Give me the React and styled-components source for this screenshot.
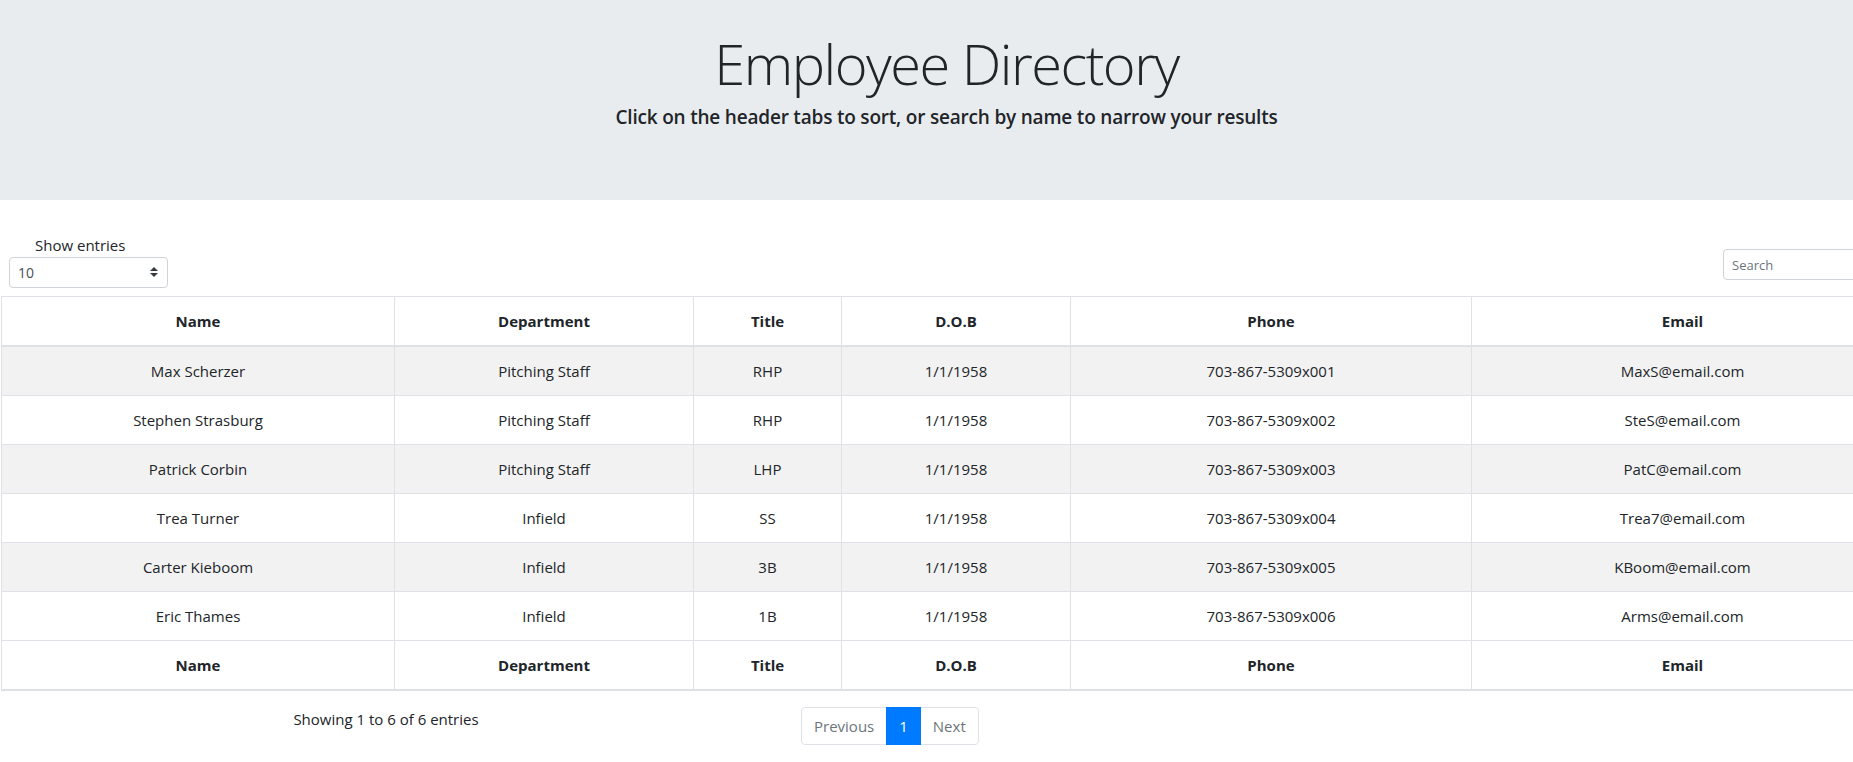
import React from "react";
import styled, { createGlobalStyle } from "styled-components";

const GlobalStyle = createGlobalStyle`
  html, body {
    margin: 0;
    overflow-x: hidden;
  }
  body {
    font-family: "Open Sans", "Noto Sans", sans-serif;
    font-size: 15px;
    color: #212529;
    background: #fff;
  }
  * {
    box-sizing: border-box;
  }
`;

const Page = styled.div`
  width: 1893px;
`;

const Jumbotron = styled.header`
  background: #e9ecef;
  height: 200px;
  padding-top: 30px;
  text-align: center;
`;

const Title = styled.h1`
  margin: 0;
  font-size: 56px;
  font-weight: 300;
  line-height: 1.2;
  letter-spacing: -1.5px;
`;

const Subtitle = styled.p`
  margin: 5px 0 0;
  font-size: 19px;
  font-weight: 600;
  line-height: 30px;
  letter-spacing: -0.2px;
`;

const Controls = styled.div`
  display: flex;
  justify-content: space-between;
  align-items: flex-end;
  padding: 33px 0 8px 9px;
`;

const LengthBox = styled.div`
  display: flex;
  flex-direction: column;
`;

const Label = styled.label`
  padding-left: 26px;
  line-height: 24px;
`;

const SelectWrap = styled.div`
  position: relative;
  width: 159px;
`;

const Select = styled.select`
  appearance: none;
  width: 100%;
  height: 31px;
  padding: 0 24px 0 8px;
  border: 1px solid #ced4da;
  border-radius: 4px;
  background: #fff;
  font-family: inherit;
  font-size: 14px;
  color: #495057;
`;

const Arrow = styled.svg`
  position: absolute;
  right: 10px;
  top: 10px;
  pointer-events: none;
`;

const Search = styled.input`
  width: 170px;
  height: 31px;
  margin-bottom: 8px;
  padding: 0 8px;
  border: 1px solid #ced4da;
  border-radius: 4px;
  font-family: inherit;
  font-size: 13px;
  color: #495057;

  &::placeholder {
    color: #6c757d;
  }
`;

const Table = styled.table`
  margin-left: 1px;
  width: 1892px;
  table-layout: fixed;
  border-collapse: collapse;
  border: 1px solid #dee2e6;
`;

const Cell = styled.td`
  padding: 12px;
  border: 1px solid #dee2e6;
  text-align: center;
  line-height: 24px;
  font-weight: ${(p) => (p.head ? 700 : 400)};
  border-bottom-width: ${(p) => (p.thick ? "2px" : "1px")};
`;

const Row = styled.tr`
  background: ${(p) => (p.striped ? "#f2f2f2" : "#fff")};
`;

const Footer = styled.div`
  display: grid;
  grid-template-columns: 772px auto;
  column-gap: 29px;
  align-items: start;
  padding-top: 16px;
`;

const Info = styled.div`
  text-align: center;
  line-height: 24px;
`;

const Pagination = styled.ul`
  display: flex;
  margin: 0;
  padding: 0;
  list-style: none;
`;

const PageLink = styled.li`
  padding: 8px 12px;
  line-height: 20px;
  border: 1px solid ${(p) => (p.active ? "#007bff" : "#dee2e6")};
  margin-left: ${(p) => (p.first ? "0" : "-1px")};
  background: ${(p) => (p.active ? "#007bff" : "#fff")};
  color: ${(p) => (p.active ? "#fff" : "#6c757d")};
  position: ${(p) => (p.active ? "relative" : "static")};
  z-index: ${(p) => (p.active ? 1 : "auto")};
  border-radius: ${(p) => (p.first ? "4px 0 0 4px" : p.last ? "0 4px 4px 0" : "0")};
  cursor: pointer;
`;

const columns = ["Name", "Department", "Title", "D.O.B", "Phone", "Email"];
const widths = [393, 299, 148, 229, 401, 422];

const employees = [
  ["Max Scherzer", "Pitching Staff", "RHP", "1/1/1958", "703-867-5309x001", "MaxS@email.com"],
  ["Stephen Strasburg", "Pitching Staff", "RHP", "1/1/1958", "703-867-5309x002", "SteS@email.com"],
  ["Patrick Corbin", "Pitching Staff", "LHP", "1/1/1958", "703-867-5309x003", "PatC@email.com"],
  ["Trea Turner", "Infield", "SS", "1/1/1958", "703-867-5309x004", "Trea7@email.com"],
  ["Carter Kieboom", "Infield", "3B", "1/1/1958", "703-867-5309x005", "KBoom@email.com"],
  ["Eric Thames", "Infield", "1B", "1/1/1958", "703-867-5309x006", "Arms@email.com"],
];

function App() {
  return (
    <Page>
      <GlobalStyle />
      <Jumbotron>
        <Title>Employee Directory</Title>
        <Subtitle>Click on the header tabs to sort, or search by name to narrow your results</Subtitle>
      </Jumbotron>

      <Controls>
        <LengthBox>
          <Label>Show entries</Label>
          <SelectWrap>
            <Select defaultValue="10">
              <option>10</option>
              <option>25</option>
              <option>50</option>
              <option>100</option>
            </Select>
            <Arrow width="8" height="10" viewBox="0 0 8 10">
              <path d="M4 0 L8 4 H0 Z M4 10 L0 6 H8 Z" fill="#343a40" />
            </Arrow>
          </SelectWrap>
        </LengthBox>
        <Search type="text" placeholder="Search" />
      </Controls>

      <Table>
        <colgroup>
          {widths.map((w, i) => (
            <col key={i} style={{ width: w }} />
          ))}
        </colgroup>
        <thead>
          <Row>
            {columns.map((c) => (
              <Cell as="th" head thick key={c}>
                {c}
              </Cell>
            ))}
          </Row>
        </thead>
        <tbody>
          {employees.map((e, i) => (
            <Row striped={i % 2 === 0} key={e[0]}>
              {e.map((v, j) => (
                <Cell key={j}>{v}</Cell>
              ))}
            </Row>
          ))}
        </tbody>
        <tfoot>
          <Row>
            {columns.map((c) => (
              <Cell as="th" head thick key={c}>
                {c}
              </Cell>
            ))}
          </Row>
        </tfoot>
      </Table>

      <Footer>
        <Info>Showing 1 to 6 of 6 entries</Info>
        <Pagination>
          <PageLink first>Previous</PageLink>
          <PageLink active>1</PageLink>
          <PageLink last>Next</PageLink>
        </Pagination>
      </Footer>
    </Page>
  );
}

export default App;
